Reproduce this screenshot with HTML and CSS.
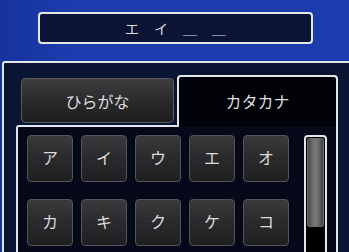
FILE: index.html
```html
<!DOCTYPE html>
<html lang="ja">
<head>
<meta charset="UTF-8">
<meta name="viewport" content="width=device-width, initial-scale=1.0">
<title>名前入力</title>
<link rel="stylesheet" href="styles.css">
</head>
<body>
    <div id="entry">
        <span class="slot">エ</span>
        <span class="slot">イ</span>
        <span class="slot">＿</span>
        <span class="slot">＿</span>
    </div>
    <div id="main">
        <div class="tabs">
            <button class="tab">ひらがな</button>
            <button class="tab active">カタカナ</button>
        </div>
        <div id="board">
            <div class="keys">
                <button class="key">ア</button>
                <button class="key">イ</button>
                <button class="key">ウ</button>
                <button class="key">エ</button>
                <button class="key">オ</button>
                <button class="key">カ</button>
                <button class="key">キ</button>
                <button class="key">ク</button>
                <button class="key">ケ</button>
                <button class="key">コ</button>
            </div>
            <div class="scrollbar">
                <div class="thumb"></div>
            </div>
        </div>
    </div>
</body>
</html>
```

FILE: styles.css
```css
:root {
    --bg-blue: #1c3cae;
    --panel: #0a1433;
    --board: #05091a;
    --line: #e4e6ea;
    --text: #dcdcdc;
}
body {
    margin: 0;
    height: 252px;
    overflow: hidden;
    background: linear-gradient(90deg, #16339c, var(--bg-blue) 20%, var(--bg-blue));
    font-family: "Noto Sans CJK JP", "Noto Sans", sans-serif;
    color: var(--text);
}
#entry {
    margin: 12px 0 0 38px;
    width: 275px;
    height: 32px;
    box-sizing: border-box;
    border: 2px solid var(--line);
    border-radius: 4px;
    background: #0b1435;
    display: flex;
    justify-content: center;
    align-items: center;
    gap: 15px;
}
.slot {
    width: 14px;
    font-size: 14px;
    line-height: 1;
    text-align: center;
}
#main {
    margin: 17px 0 0 2px;
    width: 347px;
    height: 191px;
    box-sizing: border-box;
    border-top: 2px solid var(--line);
    border-left: 2px solid var(--line);
    border-top-left-radius: 3px;
    background: var(--panel);
    padding: 12px 0 0 12px;
    overflow: hidden;
}
.tabs {
    display: flex;
    align-items: flex-end;
    gap: 3px;
    padding-left: 5px;
    width: 322px;
    box-sizing: border-box;
}
button {
    font-family: inherit;
    color: var(--text);
    padding: 0;
    cursor: pointer;
}
.tab {
    width: 153px;
    height: 45px;
    margin-bottom: 2px;
    font-size: 16px;
    border: 1px solid #58595c;
    border-radius: 4px;
    background: linear-gradient(#3e3e41, #29292c 55%, #1e1e21);
}
.tab.active {
    width: 161px;
    height: 52px;
    margin-bottom: -2px;
    padding-bottom: 2px;
    border: 2px solid var(--line);
    border-bottom: none;
    border-radius: 4px 4px 0 0;
    background: #020308;
    position: relative;
    z-index: 1;
}
#board {
    width: 322px;
    height: 127px;
    box-sizing: border-box;
    border: 2px solid var(--line);
    border-bottom: none;
    border-radius: 3px 0 0 0;
    background: var(--board);
    padding: 8px 0 0 9px;
    display: flex;
    align-items: flex-start;
}
.keys {
    display: grid;
    grid-template-columns: repeat(5, 46px);
    grid-auto-rows: 47px;
    column-gap: 8px;
    row-gap: 17px;
}
.key {
    font-size: 16px;
    border: 1px solid #545558;
    border-radius: 4px;
    background: linear-gradient(#3a3a3c, #2a2a2c 50%, #202022);
    padding-bottom: 3px;
}
.scrollbar {
    margin-left: 15px;
    width: 23px;
    height: 117px;
    box-sizing: border-box;
    border: 2px solid var(--line);
    border-bottom: none;
    border-radius: 4px 4px 0 0;
    background: #000;
    padding: 1px;
}
.thumb {
    height: 87px;
    border: 1px solid #6c6c6c;
    border-radius: 2px;
    background: linear-gradient(90deg, #4a4a4a, #7a7a7a 45%, #6a6a6a 70%, #3e3e3e);
}
```
